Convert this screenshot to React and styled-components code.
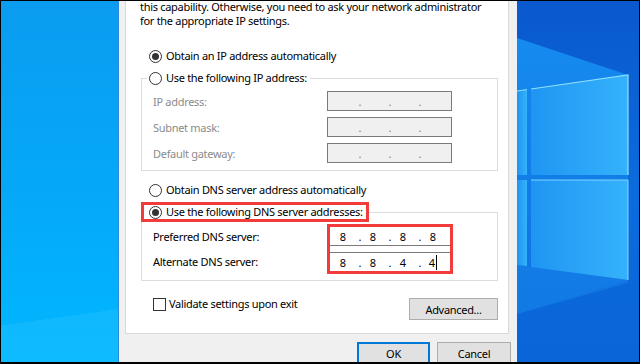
import React from "react";
import styled, { createGlobalStyle } from "styled-components";

const GlobalStyle = createGlobalStyle`
  html, body { margin: 0; padding: 0; background: #000; }
  body { font-family: "Noto Sans", "Open Sans", sans-serif; }
`;

const Frame = styled.div`
  width: 640px;
  height: 364px;
  box-sizing: border-box;
  border: 1px solid #000;
  border-bottom-width: 2px;
  display: flex;
  overflow: hidden;
`;

const LeftDesk = styled.div`
  width: 117px;
  flex: none;
  background:
    linear-gradient(172deg, transparent 86%, rgba(120, 220, 255, 0.12) 86%),
    linear-gradient(180deg, #0a9cf0 0%, #05a9f8 55%, #00b7ff 100%);
`;

const RightDesk = styled.div`
  flex: 1;
  display: flex;
  background: #0b63d6;
`;

const Dialog = styled.div`
  width: 399px;
  flex: none;
  box-sizing: border-box;
  border-left: 1px solid #2b86dc;
  background: #f0f0f0;
  padding: 0 8px 0 6px;
  display: flex;
  flex-direction: column;
  font-size: 11px;
  letter-spacing: -0.3px;
  color: #000;
`;

const Panel = styled.div`
  height: 333px;
  flex: none;
  box-sizing: border-box;
  background: #fff;
  border: 1px solid #d9d9d9;
  border-top: none;
  padding: 0 10px 0 15px;
  display: flex;
  flex-direction: column;
`;

const Intro = styled.p`
  margin: -1px 0 0 -1px;
  line-height: 14px;
  white-space: nowrap;
`;

const RadioRow = styled.label`
  display: flex;
  align-items: center;
  gap: 4px;
  height: 16px;
  line-height: 16px;
  margin: ${p => p.$top || 0}px 0 0 8px;
  white-space: nowrap;
`;

const Radio = styled.span`
  width: 13px;
  height: 13px;
  flex: none;
  box-sizing: border-box;
  border-radius: 50%;
  border: 1px solid #333;
  background: #fff;
  display: flex;
  align-items: center;
  justify-content: center;

  &::after {
    content: "";
    width: 7px;
    height: 7px;
    border-radius: 50%;
    background: #333;
    display: ${p => (p.$checked ? "block" : "none")};
  }
`;

const Group = styled.fieldset`
  margin: ${p => p.$top || 0}px 0 0 0;
  padding: 0;
  min-width: 0;
  border: 1px solid #dcdcdc;
`;

const Legend = styled.legend`
  display: flex;
  align-items: center;
  gap: 4px;
  height: 16px;
  line-height: 16px;
  margin-left: 5px;
  padding: 0 3px 0 2px;
  white-space: nowrap;
`;

const MarkedLegend = styled.legend`
  display: flex;
  align-items: center;
  gap: 4px;
  height: 20px;
  box-sizing: border-box;
  line-height: 14px;
  margin-left: -1px;
  padding: 0 3px 0 5px;
  border: 3px solid #f23b3b;
  white-space: nowrap;
`;

const GroupBody = styled.div`
  padding: ${p => p.$pad};
  display: flex;
  flex-direction: column;
  gap: 6px;
`;

const FieldRow = styled.div`
  display: grid;
  grid-template-columns: 174px 125px;
  align-items: center;
  height: 20px;
`;

const FieldLabel = styled.span`
  color: ${p => (p.$disabled ? "#8b8b8b" : "#000")};
  white-space: nowrap;
`;

const IpBox = styled.div`
  height: 20px;
  box-sizing: border-box;
  border: 1px solid #7a7a7a;
  background: #f0f0f0;
  display: flex;
  align-items: center;
  color: #7a7a7a;
`;

const Octets = styled.div`
  display: flex;
  align-items: center;
  margin-left: ${p => p.$shift || 0}px;
  letter-spacing: 0;
`;

const Octet = styled.span`
  width: 30px;
  text-align: center;
  display: flex;
  justify-content: center;
  align-items: center;
`;

const Dot = styled.span`
  width: 0;
  margin-left: 2px;
  margin-right: -2px;
  display: flex;
  justify-content: center;
`;

const Caret = styled.span`
  width: 1px;
  height: 15px;
  background: #000;
  margin-left: 1px;
`;

const DnsRows = styled.div`
  display: flex;
`;

const DnsLabels = styled.div`
  width: 174px;
  padding-top: 3px;
  display: flex;
  flex-direction: column;
  gap: 6px;
`;

const DnsLabel = styled.span`
  height: 19px;
  line-height: 19px;
  white-space: nowrap;
`;

const RedFrame = styled.div`
  width: 126px;
  box-sizing: border-box;
  border: 3px solid #f23b3b;
  display: flex;
  flex-direction: column;
  gap: 6px;
`;

const DnsInput = styled.div`
  height: 19px;
  box-sizing: border-box;
  background: #fff;
  border-${p => (p.$first ? "bottom" : "top")}: 1px solid #7a7a7a;
  display: flex;
  align-items: center;
`;

const BottomRow = styled.div`
  display: flex;
  justify-content: space-between;
  align-items: flex-start;
  margin-top: 16px;
`;

const CheckRow = styled.label`
  display: flex;
  align-items: center;
  gap: 3px;
  height: 14px;
  line-height: 14px;
  margin-left: 12px;
  white-space: nowrap;
`;

const CheckBox = styled.span`
  width: 13px;
  height: 13px;
  box-sizing: border-box;
  border: 1px solid #333;
  background: #fff;
  flex: none;
`;

const Button = styled.button`
  width: ${p => p.$w}px;
  height: ${p => p.$h}px;
  margin-top: ${p => p.$top || 0}px;
  box-sizing: border-box;
  padding: 0;
  background: #e1e1e1;
  border: ${p => (p.$default ? "2px solid #0078d7" : "1px solid #adadad")};
  font-family: inherit;
  font-size: 11px;
  letter-spacing: -0.3px;
  color: #000;
  flex: none;
`;

const Footer = styled.div`
  display: flex;
  justify-content: flex-end;
  gap: 7px;
  margin: 8px -2px 0 0;
`;

const IpField = ({ label }) => (
  <FieldRow>
    <FieldLabel $disabled>{label}</FieldLabel>
    <IpBox>
      <Octets>
        <Octet />
        <Dot>.</Dot>
        <Octet />
        <Dot>.</Dot>
        <Octet />
        <Dot>.</Dot>
        <Octet />
      </Octets>
    </IpBox>
  </FieldRow>
);

const DnsValue = ({ parts, caret }) => (
  <Octets $shift={-2}>
    {parts.map((p, i) => (
      <React.Fragment key={i}>
        {i > 0 && <Dot>.</Dot>}
        <Octet>
          {p}
          {caret && i === parts.length - 1 && <Caret />}
        </Octet>
      </React.Fragment>
    ))}
  </Octets>
);

const Wallpaper = () => (
  <svg width="122" height="361" viewBox="0 0 122 361">
    <defs>
      <linearGradient id="wpBg" x1="0" y1="0" x2="0" y2="1">
        <stop offset="0" stopColor="#0a58cd" />
        <stop offset="0.5" stopColor="#0b6bdd" />
        <stop offset="1" stopColor="#0a65d8" />
      </linearGradient>
      <linearGradient id="wpRay" x1="0" y1="0" x2="0" y2="1">
        <stop offset="0" stopColor="#168bef" />
        <stop offset="1" stopColor="#0d70e0" />
      </linearGradient>
      <linearGradient id="wpPane" x1="0" y1="0" x2="1" y2="0">
        <stop offset="0" stopColor="#1f95f2" />
        <stop offset="1" stopColor="#35b2fb" />
      </linearGradient>
    </defs>
    <rect width="122" height="361" fill="url(#wpBg)" />
    <polygon points="0,37 111,74 111,279 0,313" fill="url(#wpRay)" />
    <polygon points="0,264 111,279 111,282 0,313" fill="#1580e8" opacity="0.6" />
    <polygon points="0,90 10,88.6 10,174 0,174" fill="url(#wpPane)" />
    <polygon points="14,88 111,74 111,174 14,174" fill="url(#wpPane)" />
    <polygon points="0,179 10,179 10,265 0,264" fill="url(#wpPane)" />
    <polygon points="14,179 111,179 111,279 14,266" fill="url(#wpPane)" />
    <polyline points="14,88 111,74 111,174" fill="none" stroke="#8ee0ff" strokeWidth="1.2" />
    <polyline points="14,179 111,179 111,279" fill="none" stroke="#7fd6ff" strokeWidth="1" />
    <line x1="0" y1="90" x2="10" y2="88.6" stroke="#8ee0ff" strokeWidth="1" />
  </svg>
);

export default function App() {
  return (
    <>
      <GlobalStyle />
      <Frame>
        <LeftDesk />
        <Dialog>
          <Panel>
            <Intro>
              this capability. Otherwise, you need to ask your network administrator
              <br />
              for the appropriate IP settings.
            </Intro>

            <RadioRow $top={20}>
              <Radio $checked />
              Obtain an IP address automatically
            </RadioRow>

            <Group $top={6}>
              <Legend>
                <Radio />
                Use the following IP address:
              </Legend>
              <GroupBody $pad="5px 0 7px 11px">
                <IpField label="IP address:" />
                <IpField label="Subnet mask:" />
                <IpField label="Default gateway:" />
              </GroupBody>
            </Group>

            <RadioRow $top={11}>
              <Radio />
              Obtain DNS server address automatically
            </RadioRow>

            <Group $top={4}>
              <MarkedLegend>
                <Radio $checked />
                Use the following DNS server addresses:
              </MarkedLegend>
              <GroupBody $pad="2px 0 6px 11px">
                <DnsRows>
                  <DnsLabels>
                    <DnsLabel>Preferred DNS server:</DnsLabel>
                    <DnsLabel>Alternate DNS server:</DnsLabel>
                  </DnsLabels>
                  <RedFrame>
                    <DnsInput $first>
                      <DnsValue parts={["8", "8", "8", "8"]} />
                    </DnsInput>
                    <DnsInput>
                      <DnsValue parts={["8", "8", "4", "4"]} caret />
                    </DnsInput>
                  </RedFrame>
                </DnsRows>
              </GroupBody>
            </Group>

            <BottomRow>
              <CheckRow>
                <CheckBox />
                Validate settings upon exit
              </CheckRow>
              <Button $w={89} $h={22} $top={1}>Advanced...</Button>
            </BottomRow>
          </Panel>
          <Footer>
            <Button $w={73} $h={23} $default>OK</Button>
            <Button $w={74} $h={23}>Cancel</Button>
          </Footer>
        </Dialog>
        <RightDesk>
          <Wallpaper />
        </RightDesk>
      </Frame>
    </>
  );
}
